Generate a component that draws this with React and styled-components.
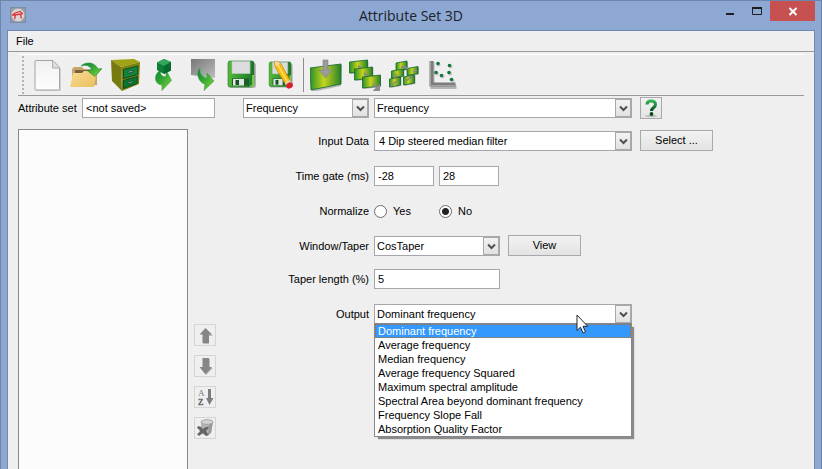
import React, { useState } from 'react';
import styled, { createGlobalStyle, css } from 'styled-components';

const GlobalStyle = createGlobalStyle`
  * { box-sizing: border-box; }
  body { margin: 0; background: #8ca8d3; }
  body, button, input, select {
    font-family: "Liberation Sans", Arial, sans-serif;
    font-size: 11px;
    line-height: 14px;
    color: #000;
  }
`;

const Window = styled.div`
  display: flex;
  flex-direction: column;
  min-height: 100vh;
  padding: 0 6px;
  border: 1px solid #6e86ae;
  border-bottom: 0;
  background: #8ca8d3;
`;

const TitleBar = styled.header`
  display: grid;
  grid-template-columns: 1fr auto 1fr;
  height: 29px;
`;

const AppIcon = styled.svg`
  width: 16px;
  height: 16px;
  margin: 6px 3px;
`;

const Title = styled.h1`
  margin: 0;
  font: 400 14px/29px "Open Sans", sans-serif;
  color: #1d2129;
`;

const WindowControls = styled.div`
  display: flex;
  justify-content: flex-end;
`;

const WindowButton = styled.button`
  width: ${(p) => (p.$close ? 45 : 27)}px;
  height: 20px;
  padding: 0;
  border: 0;
  background: ${(p) => (p.$close ? '#c75050' : 'transparent')};
  svg { display: block; margin: 0 auto; }
`;

const Client = styled.main`
  flex: 1;
  display: flex;
  flex-direction: column;
  border: 1px solid #7089b2;
  border-bottom: 0;
  background: #efefef;
`;

const MenuBar = styled.nav`
  display: flex;
  height: 21px;
  padding: 0 4px;
  border-bottom: 1px solid #999;
`;

const MenuButton = styled.button`
  padding: 0 4px;
  border: 0;
  background: none;
`;

const ToolBar = styled.div`
  display: flex;
  align-items: center;
  gap: 7px;
  height: 42px;
  margin: 2px 10px 0;
  padding-left: 4px;
  border-top: 1px solid #fff;
  border-bottom: 1px solid #999;
`;

const Grip = styled.div`
  width: 2px;
  height: 38px;
  background: repeating-linear-gradient(#b4b4b4 0 2px, transparent 2px 4px);
`;

const ToolButton = styled.button`
  width: 32px;
  height: 32px;
  padding: 0;
  border: 0;
  background: none;
  svg { display: block; width: 32px; height: 32px; }
`;

const Separator = styled.div`
  width: 1px;
  height: 34px;
  margin: 0 -1px;
  background: #8d8d8d;
`;

const Body = styled.div`
  flex: 1;
  display: flex;
  gap: 27px;
  padding: 1px 10px 0;
`;

const SidePane = styled.section`
  flex: 0 0 198px;
  display: flex;
  flex-direction: column;
  gap: 10px;
`;

const SetRow = styled.div`
  display: flex;
  align-items: center;
  justify-content: space-between;
  height: 22px;
  padding-right: 1px;
  label { white-space: nowrap; }
`;

const Lists = styled.div`
  flex: 1;
  display: flex;
  gap: 6px;
`;

const AttributeList = styled.div`
  flex: 1;
  border: 1px solid #86868c;
  border-bottom: 0;
  background: #fcfcfc;
`;

const SideButtons = styled.div`
  display: flex;
  flex-direction: column;
  gap: 9px;
  padding-top: 195px;
`;

const IconButton = styled.button`
  width: 22px;
  height: 22px;
  padding: 0;
  border: 1px solid ${(p) => (p.disabled ? '#d5d5d5' : '#a9a9ab')};
  background: ${(p) => (p.disabled ? '#efefef' : 'linear-gradient(#f2f2f2, #e4e4e4)')};
  svg { display: block; width: 20px; height: 20px; }
`;

const Form = styled.form`
  flex: 1;
  display: flex;
  flex-direction: column;
`;

const Row = styled.div`
  display: grid;
  grid-template-columns: 126px auto;
  justify-content: start;
  column-gap: 5px;
  align-items: center;
  height: 22px;
  margin-top: ${(p) => p.$space || 0}px;
`;

const Label = styled.label`
  text-align: right;
  white-space: nowrap;
`;

const Controls = styled.div`
  display: flex;
  align-items: center;
  gap: ${(p) => p.$gap ?? 8}px;
`;

const box = css`
  height: 20px;
  border: 1px solid #a6a6ac;
  border-radius: 0;
  background: #fff;
  outline: 0;
`;

const TextBox = styled.input`
  ${box}
  width: ${(p) => p.$width}px;
  padding: 0 3px;
`;

const ComboFrame = styled.div`
  position: relative;
  width: ${(p) => p.$width}px;
  height: 20px;
`;

const ComboSelect = styled.select`
  ${box}
  display: block;
  width: 100%;
  padding: 0 18px 0 ${(p) => (p.$inset ? 4 : 2)}px;
  appearance: none;
`;

const ComboArrow = styled.span`
  position: absolute;
  top: 1px;
  right: 1px;
  width: 16px;
  height: 18px;
  border: 1px solid #a9a9ab;
  background: linear-gradient(#f2f2f2, #e2e2e2);
  pointer-events: none;
  svg { display: block; width: 14px; height: 16px; }
`;

const PushButton = styled.button`
  width: 73px;
  height: 21px;
  margin-bottom: 1px;
  padding: 0 0 1px;
  border: 1px solid #a9a9ad;
  background: linear-gradient(#f2f2f2, #e3e3e3);
`;

const RadioLabel = styled.label`
  display: flex;
  align-items: center;
  gap: 6px;
  width: 65px;
`;

const Radio = styled.input`
  appearance: none;
  width: 13px;
  height: 13px;
  margin: 0;
  border: 1px solid #6c6c6c;
  border-radius: 50%;
  background: ${(p) => (p.checked ? 'radial-gradient(circle, #222 0 3px, #fff 4px)' : '#fff')};
`;

const Popup = styled.ul`
  position: absolute;
  z-index: 1;
  top: 19px;
  left: 0;
  width: 100%;
  margin: 0;
  padding: 0;
  border: 1px solid #828790;
  background: #fff;
  box-shadow: 3px 3px 1px -1px #8b8b8b;
  list-style: none;
`;

const Option = styled.li`
  height: 14px;
  padding: 0 3px;
  white-space: nowrap;
  ${(p) => p.$active && css`
    color: #fff;
    background: #3399ff;
    outline: 1px dotted #c8660a;
    outline-offset: -1px;
  `}
`;

const Pointer = styled.svg`
  position: absolute;
  z-index: 2;
  top: 10px;
  left: 202px;
  width: 13px;
  height: 20px;
  pointer-events: none;
`;

const Defs = styled.svg`
  position: absolute;
  width: 0;
  height: 0;
`;

function Gradients() {
  return (
    <Defs aria-hidden="true">
      <defs>
        <linearGradient id="paper" x1="0" y1="0" x2="0" y2="1"><stop stopColor="#f1f1f3" /><stop offset="1" stopColor="#fdfdfd" /></linearGradient>
        <linearGradient id="panel"><stop stopColor="#2c9029" /><stop offset=".45" stopColor="#c6d51c" /><stop offset="1" stopColor="#28802c" /></linearGradient>
        <linearGradient id="leaf" x1="0" y1="0" x2="1" y2="1"><stop stopColor="#08813b" /><stop offset=".5" stopColor="#3cac36" /><stop offset="1" stopColor="#8bd23f" /></linearGradient>
        <linearGradient id="folder" x1="0" y1="0" x2="1" y2="1"><stop stopColor="#fbdc96" /><stop offset="1" stopColor="#e9bf5c" /></linearGradient>
        <linearGradient id="screen" x1="0" y1="0" x2="1" y2="1"><stop stopColor="#777" /><stop offset="1" stopColor="#bdbdbd" /></linearGradient>
        <linearGradient id="disk" x1="0" y1="0" x2="1" y2="0"><stop stopColor="#58b83a" /><stop offset=".6" stopColor="#2c9330" /><stop offset="1" stopColor="#217326" /></linearGradient>
        <linearGradient id="help" x1="0" y1="0" x2="0" y2="1"><stop stopColor="#35b558" /><stop offset="1" stopColor="#044a1d" /></linearGradient>
      </defs>
    </Defs>
  );
}

const Svg = ({ children, size = 32 }) => (
  <svg viewBox={`0 0 ${size} ${size}`} fill="none" aria-hidden="true">{children}</svg>
);

const NewIcon = () => (
  <Svg>
    <path d="M5 3h19l6 7v22H5z" fill="#bbb" opacity=".55" />
    <path d="M5 1.5h17l6.500 7V30q0 1-1 1H5q-1 0-1-1V2.500q0-1 1-1z" fill="url(#paper)" stroke="#a3a3a5" />
    <path d="M21.500 2v7h7" fill="#dedee0" stroke="#aaa" />
  </Svg>
);

const OpenIcon = () => (
  <Svg>
    <path d="M2 28V10l2-2h8l2 2h12l1 4v12z" fill="#c7a66c" />
    <path d="M5 11h20v5H5z" fill="#79603e" />
    <path d="M0 28l3-14h9l2-2h13l-3 16z" fill="url(#folder)" />
    <path d="M11 7C15 3 24 2 28 10l4-.5-7 8-8-6 5-.8C20 7 16 5 11 7z" fill="url(#leaf)" stroke="#1c8b36" strokeWidth=".6" />
  </Svg>
);

const CabinetIcon = () => (
  <Svg>
    <path d="M2 1l23-1 6 3-19 5z" fill="#a0a315" />
    <path d="M2 1l10 7 1 24L3 22z" fill="#777a0e" />
    <path d="M12 8l19-5-1 22-17 7z" fill="#7f830f" />
    <path d="M14.500 10.500L29 7l-.5 8.500-14 4z" fill="#13843b" stroke="#0a4e22" />
    <path d="M14.500 21.500l14-4-.5 7-13.500 5z" fill="#0c7433" stroke="#0a4e22" />
    <path d="M19 12.500l5-1.300v1.600l-5 1.400zM19 23.200l5-1.500v1.600l-5 1.500z" fill="#a7cbb2" stroke="#093e1c" strokeWidth=".7" />
  </Svg>
);

const CubeIcon = () => (
  <Svg>
    <path d="M13 11C6 14 5 25 14 26v5.500l9.500-10L18 11v6.500C14 18 11.500 15 13 11z" fill="url(#leaf)" stroke="#43a83b" strokeWidth=".6" />
    <path d="M9 3.500L16 0l7 3v8.500L16 15l-7-4z" fill="#0d7d38" />
    <path d="M9 3.500L16 0l7 3-7 4z" fill="#35a45c" />
    <path d="M16 7l7-4v8.500L16 15z" fill="#086a2d" />
  </Svg>
);

const ScreenIcon = () => (
  <Svg>
    <path d="M4 0h24v19L4 16z" fill="url(#screen)" />
    <path d="M13 9c-5 5-1 15 5 16l-1 6.500 10-9.500-7-8v5C15 18 12 14 13 9z" fill="url(#leaf)" stroke="#3aa53a" strokeWidth=".6" />
  </Svg>
);

const DiskShape = () => (
  <>
    <rect x="3" y="4" width="27" height="25" rx="2" fill="#8f8f8f" opacity=".6" />
    <path d="M4 2h22q2 0 2 2v22l-2 2H4q-2 0-2-2V4q0-2 2-2z" fill="url(#disk)" stroke="#22742b" strokeWidth=".6" />
    <path d="M6 2.500h18v12H6z" fill="#dcdce0" stroke="#b6cab6" strokeWidth=".7" />
    <path d="M6 19.500h17v7H6z" fill="#17602c" />
    <path d="M7 20h11v6.500H7z" fill="#e2e6e2" />
    <path d="M9.500 21h3.500v5H9.500z" fill="#164f28" />
    <path d="M27 16v10l-3 2" stroke="#72ca48" strokeWidth="2" />
  </>
);

const SaveIcon = () => <Svg><DiskShape /></Svg>;

const SaveAsIcon = () => (
  <Svg>
    <g transform="translate(2.500 1) scale(.84 .95)"><DiskShape /></g>
    <path d="M9.500 2l6 2 10 18-5 3.500L10 8z" fill="#f7bd15" stroke="#b77a0a" strokeWidth=".6" />
    <path d="M9.500 2l6 2L11 7.500z" fill="#f4d9a2" />
    <path d="M13 6l10 18" stroke="#ffe36a" strokeWidth="1.500" />
    <path d="M20 24.500l5-3.500 1.500 2.500-5 3.500z" fill="#d5d5d5" />
    <ellipse cx="24.500" cy="26.500" rx="3.500" ry="2.800" fill="#da1f27" transform="rotate(-30 24.500 26.500)" />
  </Svg>
);

const ImportIcon = () => (
  <Svg>
    <path d="M1 10l31-4-1 21-29 6z" fill="#777" opacity=".45" />
    <path d="M0 9l31-4v20L1 31z" fill="url(#panel)" stroke="#0b6a2b" strokeWidth=".8" />
    <path d="M13 1h5v10h4l-6.500 8L9 11h4z" fill="#9b9b9b" stroke="#7f8578" strokeWidth=".6" />
  </Svg>
);

const Panel = ({ x, y, w = 18, h = 11 }) => (
  <>
    <path d={`M${x + 1} ${y + 3}l${w} -2v${h}l${-w} 2z`} fill="#777" opacity=".5" />
    <path d={`M${x} ${y + 2}l${w} -2v${h}l${-w} 2z`} fill="url(#panel)" stroke="#0b6a2b" strokeWidth=".8" />
  </>
);

const CascadeIcon = () => (
  <Svg>
    <Panel x={0.5} y={1} />
    <path d="M9 7l4 3" stroke="#888" strokeWidth="2" />
    <Panel x={5.5} y={8} />
    <path d="M15 14l4 4" stroke="#888" strokeWidth="2" />
    <Panel x={13.5} y={16} />
    <path d="M24 25l5 5m1-3v4h-4z" stroke="#8b8b8b" strokeWidth="2" fill="#8b8b8b" />
  </Svg>
);

const ClusterIcon = () => (
  <Svg>
    <Panel x={8} y={2} w={11} h={8} />
    <Panel x={19} y={7.5} w={11} h={7} />
    <Panel x={3.5} y={10} w={12} h={7} />
    <Panel x={15.5} y={16} w={11} h={8} />
    <Panel x={1.5} y={18} w={11} h={8} />
    <path d="M6 19l3-4M13 9l3-2 4 3M18 22l6-5M3 27l6-5M25 13l4-2" stroke="#878787" strokeWidth="1.600" />
  </Svg>
);

const ScatterIcon = () => (
  <Svg>
    <path d="M5.500 3v25h24" stroke="#b5b5b5" strokeWidth="4" />
    <path d="M4.500 2v23.500h24" stroke="#7c7c7c" strokeWidth="4" />
    <path d="M3.500 2v24.500h24" stroke="#a5a5a5" strokeWidth="1" />
    <g fill="#999" opacity=".5"><circle cx="11.500" cy="5.500" r="2" /><circle cx="23.500" cy="7.500" r="2" /><circle cx="10" cy="14.500" r="2" /><circle cx="15.500" cy="17.500" r="2" /><circle cx="23" cy="14.500" r="2" /><circle cx="25.500" cy="21.500" r="2" /></g>
    <g fill="#13753b"><circle cx="11" cy="4.500" r="1.800" /><circle cx="22.500" cy="6.500" r="1.800" /><circle cx="9" cy="13.500" r="1.800" /><circle cx="14.500" cy="16.500" r="1.800" /><circle cx="22" cy="13.500" r="1.800" /><circle cx="24.500" cy="20.500" r="1.800" /></g>
  </Svg>
);

const UpIcon = () => (
  <Svg size={20}>
    <path d="M11 4l7 7h-4v8H8z" fill="#bbb" />
    <path d="M10.500 3L17 9.500h-3V18H7.500V9.500h-3z" fill="#868686" />
  </Svg>
);

const DownIcon = () => (
  <Svg size={20}>
    <path d="M9 3h6v9h3l-7 7z" fill="#bbb" />
    <path d="M7.500 2H14v9h3l-6.500 7.500L4.500 11h3z" fill="#868686" />
  </Svg>
);

const SortIcon = () => (
  <Svg size={20}>
    <text x="3" y="9" fontFamily="Liberation Serif, serif" fontSize="9" fill="#777">A</text>
    <text x="3" y="18" fontFamily="Liberation Serif, serif" fontSize="9" fill="#444" stroke="#666" strokeWidth=".3">Z</text>
    <path d="M13 2h3v9h2.500l-4 7-3.500-7h2z" fill="#7d7d7d" />
  </Svg>
);

const TrashIcon = () => (
  <Svg size={20}>
    <path d="M6 4v11q5 4 10 0l2-11z" fill="#b5b5b5" />
    <path d="M14 6l4-2-2 11-3 2z" fill="#999" />
    <ellipse cx="12" cy="4" rx="6" ry="2.300" fill="#d4d4d4" stroke="#a2a2a2" />
    <path d="M3 8q3 0 5 3 3-3 6-2-1 2-3 4 1 2 3 4l-3 1-3-3-4 3-2-2q2-1 3-3-1-2-3-3z" fill="#666" />
  </Svg>
);

const HelpIcon = () => (
  <Svg size={20}>
    <ellipse cx="10" cy="18" rx="6" ry="1" fill="#bbb" />
    <path d="M6 6.500C6 3.500 8 3 10 3c3 0 4.500 1 4.500 3.500 0 3-4 3-4 6.500" stroke="url(#help)" strokeWidth="3" />
    <circle cx="10.500" cy="16" r="1.900" fill="#064a1e" />
  </Svg>
);

function Combo({ id, label, width, value, options, inset, children }) {
  return (
    <ComboFrame $width={width}>
      <ComboSelect id={id} aria-label={label} $inset={inset} defaultValue={value}>
        {(options || [value]).map((o) => <option key={o}>{o}</option>)}
      </ComboSelect>
      <ComboArrow>
        <svg viewBox="0 0 14 16" aria-hidden="true">
          <path d="M4 6.500l3.500 3.500L11 6.500" fill="none" stroke="#505050" strokeWidth="2" />
        </svg>
      </ComboArrow>
      {children}
    </ComboFrame>
  );
}

const TOOLS = [
  ['New attribute set', NewIcon],
  ['Open attribute set', OpenIcon],
  ['Open default set', CabinetIcon],
  ['Import set', CubeIcon],
  ['Reconstruct set', ScreenIcon],
  ['Save set', SaveIcon],
  ['Save set as', SaveAsIcon],
  null,
  ['Redisplay element', ImportIcon],
  ['Evaluate attributes', CascadeIcon],
  ['Evaluate positions', ClusterIcon],
  ['Cross-plot', ScatterIcon],
];

const SIDE_ACTIONS = [
  ['Move up', UpIcon],
  ['Move down', DownIcon],
  ['Sort', SortIcon],
  ['Remove', TrashIcon],
];

const OUTPUTS = [
  'Dominant frequency',
  'Average frequency',
  'Median frequency',
  'Average frequency Squared',
  'Maximum spectral amplitude',
  'Spectral Area beyond dominant frequency',
  'Frequency Slope Fall',
  'Absorption Quality Factor',
];

export default function App() {
  const [normalize, setNormalize] = useState('No');
  return (
    <Window>
      <GlobalStyle />
      <Gradients />
      <TitleBar>
        <AppIcon viewBox="0 0 16 16" aria-hidden="true">
          <rect x=".5" y=".5" width="15" height="15" fill="#8f9aab" stroke="#7f8ca3" />
          <circle cx="8" cy="8" r="6.800" fill="#d9d5d5" stroke="#a6a3a8" />
          <path d="M2 8.500l3-2.500 5-1.500 3 2.500M3 8l9-1M5.500 8l-1 4M10.500 7.500l1 4" fill="none" stroke="#e0353b" strokeWidth="1.300" />
        </AppIcon>
        <Title>Attribute Set 3D</Title>
        <WindowControls>
          <WindowButton aria-label="Minimize">
            <svg width="27" height="20"><path d="M10 12h8v2h-8z" fill="#1e1e1e" /></svg>
          </WindowButton>
          <WindowButton aria-label="Maximize">
            <svg width="27" height="20"><path d="M9.500 6.500h9v7h-9z" fill="none" stroke="#1e1e1e" /><path d="M9 6h10v2H9z" fill="#1e1e1e" /></svg>
          </WindowButton>
          <WindowButton $close aria-label="Close">
            <svg width="45" height="20"><path d="M19.500 7l7 7m0-7l-7 7" stroke="#fff" strokeWidth="2" /></svg>
          </WindowButton>
        </WindowControls>
      </TitleBar>
      <Client>
        <MenuBar><MenuButton>File</MenuButton></MenuBar>
        <ToolBar role="toolbar">
          <Grip />
          {TOOLS.map((tool, i) => {
            if (!tool) return <Separator key={i} />;
            const [name, Icon] = tool;
            return <ToolButton key={name} aria-label={name}><Icon /></ToolButton>;
          })}
        </ToolBar>
        <Body>
          <SidePane>
            <SetRow>
              <label htmlFor="set">Attribute set</label>
              <TextBox id="set" $width={133} defaultValue="<not saved>" />
            </SetRow>
            <Lists>
              <AttributeList role="listbox" aria-label="Attributes" />
              <SideButtons>
                {SIDE_ACTIONS.map(([name, Icon]) => (
                  <IconButton key={name} type="button" disabled aria-label={name}><Icon /></IconButton>
                ))}
              </SideButtons>
            </Lists>
          </SidePane>
          <Form onSubmit={(e) => e.preventDefault()}>
            <Row>
              <Combo label="Attribute type" width={126} value="Frequency" />
              <Controls>
                <Combo label="Attribute" width={258} value="Frequency" />
                <IconButton type="button" aria-label="Help"><HelpIcon /></IconButton>
              </Controls>
            </Row>
            <Row $space={11}>
              <Label htmlFor="input">Input Data</Label>
              <Controls>
                <Combo id="input" width={258} value="4 Dip steered median filter" inset />
                <PushButton type="button">Select ...</PushButton>
              </Controls>
            </Row>
            <Row $space={13}>
              <Label htmlFor="gate">Time gate (ms)</Label>
              <Controls $gap={5}>
                <TextBox id="gate" $width={60} defaultValue="-28" />
                <TextBox aria-label="Time gate end" $width={60} defaultValue="28" />
              </Controls>
            </Row>
            <Row $space={13} role="radiogroup" aria-labelledby="normalize">
              <Label as="span" id="normalize">Normalize</Label>
              <Controls $gap={0}>
                {['Yes', 'No'].map((v) => (
                  <RadioLabel key={v}>
                    <Radio type="radio" name="normalize" checked={normalize === v} onChange={() => setNormalize(v)} />
                    {v}
                  </RadioLabel>
                ))}
              </Controls>
            </Row>
            <Row $space={13}>
              <Label htmlFor="taper">Window/Taper</Label>
              <Controls>
                <Combo id="taper" width={126} value="CosTaper" />
                <PushButton type="button">View</PushButton>
              </Controls>
            </Row>
            <Row $space={11}>
              <Label htmlFor="length">Taper length (%)</Label>
              <TextBox id="length" $width={126} defaultValue="5" />
            </Row>
            <Row $space={13}>
              <Label htmlFor="output">Output</Label>
              <Combo id="output" width={258} value={OUTPUTS[0]} options={OUTPUTS}>
                <Popup role="listbox" aria-label="Output">
                  {OUTPUTS.map((o, i) => (
                    <Option key={o} role="option" aria-selected={i === 0} $active={i === 0}>{o}</Option>
                  ))}
                </Popup>
                <Pointer viewBox="0 0 13 20" aria-hidden="true">
                  <path d="M1 1v15.500l3.500-3.300 2.500 5.800 2.500-1-2.500-5.700h4.700z" fill="#fff" stroke="#26262e" />
                </Pointer>
              </Combo>
            </Row>
          </Form>
        </Body>
      </Client>
    </Window>
  );
}
